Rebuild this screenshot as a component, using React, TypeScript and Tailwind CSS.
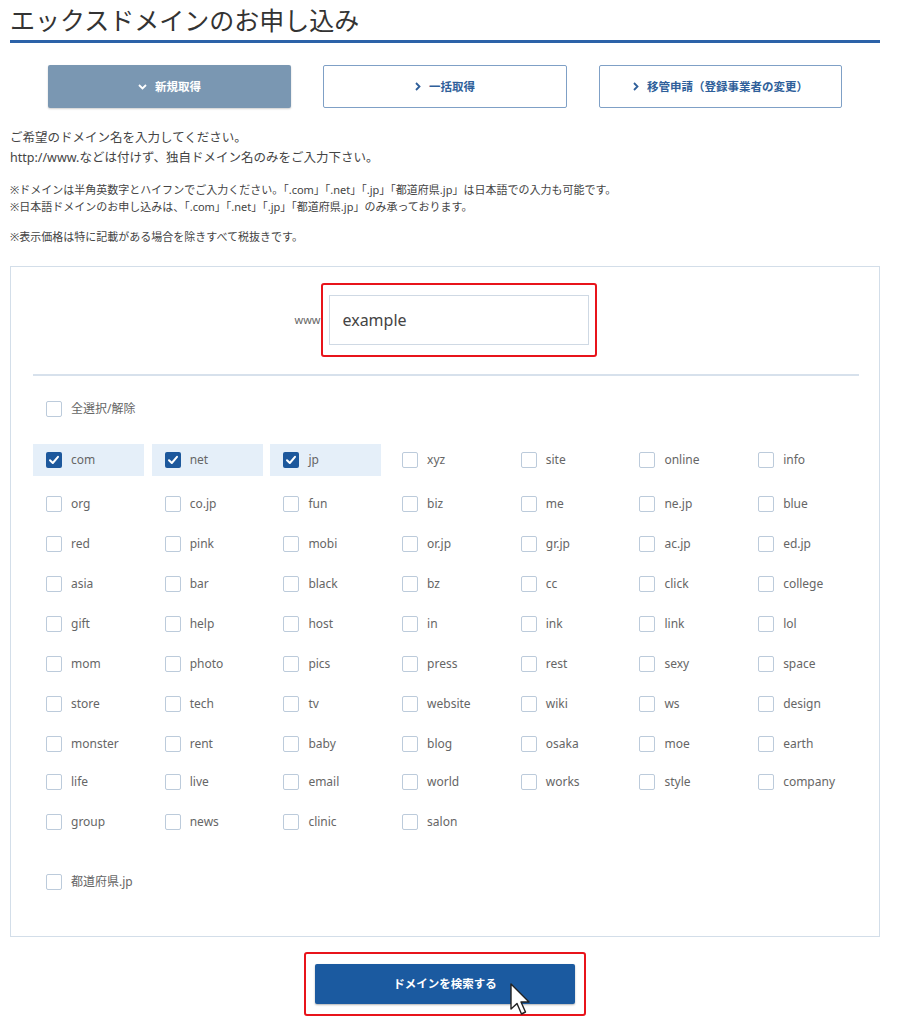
import React from "react";

const ROWS: string[][] = [
  ["com", "net", "jp", "xyz", "site", "online", "info"],
  ["org", "co.jp", "fun", "biz", "me", "ne.jp", "blue"],
  ["red", "pink", "mobi", "or.jp", "gr.jp", "ac.jp", "ed.jp"],
  ["asia", "bar", "black", "bz", "cc", "click", "college"],
  ["gift", "help", "host", "in", "ink", "link", "lol"],
  ["mom", "photo", "pics", "press", "rest", "sexy", "space"],
  ["store", "tech", "tv", "website", "wiki", "ws", "design"],
  ["monster", "rent", "baby", "blog", "osaka", "moe", "earth"],
  ["life", "live", "email", "world", "works", "style", "company"],
  ["group", "news", "clinic", "salon"],
];

const CHECKED = ["com", "net", "jp"];

const font = { fontFamily: '"Noto Sans", "Noto Sans CJK JP", sans-serif' };

function Box({ checked }: { checked?: boolean }) {
  if (checked) {
    return (
      <span className="flex h-[16px] w-[16px] shrink-0 items-center justify-center rounded-[2px] bg-[#1d589c]">
        <svg width="12" height="12" viewBox="0 0 12 12" fill="none">
          <path d="M2 6.2 L4.8 9 L10 2.8" stroke="white" strokeWidth="2" strokeLinecap="round" strokeLinejoin="round" />
        </svg>
      </span>
    );
  }
  return <span className="h-[16px] w-[16px] shrink-0 rounded-[2px] border-[1.5px] border-[#bccbdb] bg-white" />;
}

function Cell({ label }: { label: string }) {
  const checked = CHECKED.includes(label);
  return (
    <div
      className={
        "flex h-[32px] items-center gap-[9px] pl-[13px] " + (checked ? "bg-[#e5eff9]" : "")
      }
    >
      <Box checked={checked} />
      <span className="text-[12px] text-[#666]">{label}</span>
    </div>
  );
}

function Chevron({ down }: { down?: boolean }) {
  return down ? (
    <svg width="9" height="6" viewBox="0 0 9 6" fill="none">
      <path d="M1 1 L4.5 4.5 L8 1" stroke="white" strokeWidth="1.8" />
    </svg>
  ) : (
    <svg width="6" height="9" viewBox="0 0 6 9" fill="none">
      <path d="M1 1 L4.5 4.5 L1 8" stroke="#2f5f9a" strokeWidth="1.8" />
    </svg>
  );
}

export default function App() {
  return (
    <div className="min-h-[1024px] w-[899px] bg-white" style={font}>
      <div className="mx-[10px] w-[870px]">
        <h1 className="border-b-[3px] border-[#2c62a8] pt-[4px] pb-[4px] text-[25px] leading-[32px] text-[#333]">
          エックスドメインのお申し込み
        </h1>

        <div className="mt-[22px] flex gap-[32px] pl-[38px]">
          <div className="flex h-[43px] w-[243px] items-center justify-center gap-[8px] rounded-[2px] bg-[#7a97b2] text-[11.5px] font-bold text-white shadow-[0_1px_2px_rgba(0,0,0,0.2)]">
            <Chevron down />
            新規取得
          </div>
          <div className="flex h-[43px] w-[244px] items-center justify-center gap-[8px] rounded-[2px] border-[1.5px] border-[#7fa0c6] bg-white text-[11.5px] font-bold text-[#2f5f9a]">
            <Chevron />
            一括取得
          </div>
          <div className="flex h-[43px] w-[243px] items-center justify-center gap-[8px] rounded-[2px] border-[1.5px] border-[#7fa0c6] bg-white text-[11.5px] font-bold text-[#2f5f9a]">
            <Chevron />
            移管申請（登録事業者の変更）
          </div>
        </div>

        <div className="mt-[20px] text-[12.5px] leading-[20px] text-[#444]">
          <p>ご希望のドメイン名を入力してください。</p>
          <p>http://www.などは付けず、独自ドメイン名のみをご入力下さい。</p>
        </div>
        <div className="mt-[13px] text-[11px] leading-[17px] text-[#444]">
          <p>※ドメインは半角英数字とハイフンでご入力ください。「.com」「.net」「.jp」「都道府県.jp」は日本語での入力も可能です。</p>
          <p>※日本語ドメインのお申し込みは、「.com」「.net」「.jp」「都道府県.jp」のみ承っております。</p>
        </div>
        <p className="mt-[13px] text-[11px] leading-[17px] text-[#444]">
          ※表示価格は特に記載がある場合を除きすべて税抜きです。
        </p>

        <div className="mt-[21px] border border-[#d3dee9] pr-[20px] pb-[38px] pl-[22px] pt-[16px]">
          <div className="flex items-center justify-center">
            <span className="mr-[1px] text-[11px] text-[#666]">www</span>
            <div className="rounded-[3px] border-2 border-[#e8141b] px-[6px] py-[10px]">
              <div className="flex h-[50px] w-[260px] items-center border border-[#cfd9e4] px-[12px] text-[16px] text-[#444]">
                example
              </div>
            </div>
          </div>

          <div className="mt-[17px] h-[2px] bg-[#d7e1ec]" />

          <div className="mt-[24px] flex items-center gap-[9px] pl-[13px]">
            <Box />
            <span className="text-[12px] text-[#666]">全選択/解除</span>
          </div>

          <div className="mt-[26px] flex flex-col">
            {ROWS.map((row, i) => (
              <div
                key={i}
                className={
                  "grid grid-cols-[repeat(7,111px)] gap-x-[7.7px] " +
                  (i === 0 ? "mb-[12px]" : i === 7 ? "mb-[6px]" : "mb-[8px]")
                }
              >
                {row.map((d) => (
                  <Cell key={d} label={d} />
                ))}
              </div>
            ))}
          </div>

          <div className="mt-[20px] flex h-[32px] items-center gap-[9px] pl-[13px]">
            <Box />
            <span className="text-[12px] text-[#666]">都道府県.jp</span>
          </div>
        </div>

        <div className="mt-[15px] flex justify-center">
          <div className="relative rounded-[3px] border-2 border-[#e8141b] px-[9px] py-[10px]">
            <div className="flex h-[40px] w-[260px] items-center justify-center rounded-[2px] bg-[#1b5aa0] text-[11.5px] font-bold text-white shadow-[0_1px_2px_rgba(0,0,0,0.3)]">
              ドメインを検索する
            </div>
            <svg
              className="absolute left-[203px] top-[29px]"
              width="24"
              height="34"
              viewBox="0 0 24 34"
            >
              <path
                d="M2 1 L2 26 L8 20.5 L12.5 31 L16.5 29 L12 19 L20 19 Z"
                fill="white"
                stroke="#222"
                strokeWidth="1.4"
                strokeLinejoin="round"
              />
            </svg>
          </div>
        </div>
      </div>
    </div>
  );
}
